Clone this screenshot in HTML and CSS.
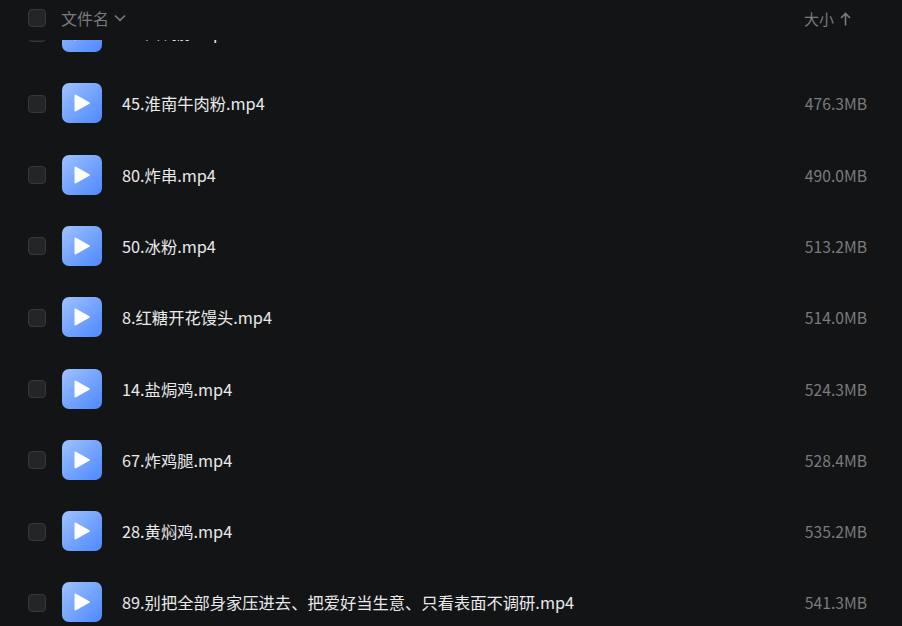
FILE: index.html
```html
<!DOCTYPE html>
<html lang="zh-CN">
<head>
  <meta charset="UTF-8">
  <meta name="viewport" content="width=device-width, initial-scale=1.0">
  <title>文件列表</title>
  <link rel="stylesheet" href="styles.css">
</head>
<body>
  <!-- Table header -->
  <div class="list-head">
    <span class="check"></span>
    <span class="head-name">文件名
      <svg class="chevron" width="12" height="8" viewBox="0 0 12 8"><path d="M1 1.500 6 6.300l5-4.800" fill="none" stroke="currentColor" stroke-width="1.600"/></svg>
    </span>
    <span class="head-size">大小
      <svg class="arrow" width="11" height="14" viewBox="0 0 11 14"><path d="M5.500 13.500V1.500M1 6l4.500-4.500L10 6" fill="none" stroke="currentColor" stroke-width="1.600"/></svg>
    </span>
  </div>

  <!-- File rows -->
  <div class="list-body">
    <div class="list-scroll">
      <div class="row">
        <span class="check"></span>
        <span class="thumb"><svg width="16" height="18" viewBox="0 0 16 18"><path d="M1.500 1.500v15L14.800 9z" fill="#fff" stroke="#fff" stroke-width="2" stroke-linejoin="round"/></svg></span>
        <span class="name">34.卤鸭脖.mp4</span>
      </div>
      <div class="row">
        <span class="check"></span>
        <span class="thumb"><svg width="16" height="18" viewBox="0 0 16 18"><path d="M1.500 1.500v15L14.800 9z" fill="#fff" stroke="#fff" stroke-width="2" stroke-linejoin="round"/></svg></span>
        <span class="name">45.淮南牛肉粉.mp4</span>
        <span class="size">476.3MB</span>
      </div>
      <div class="row">
        <span class="check"></span>
        <span class="thumb"><svg width="16" height="18" viewBox="0 0 16 18"><path d="M1.500 1.500v15L14.800 9z" fill="#fff" stroke="#fff" stroke-width="2" stroke-linejoin="round"/></svg></span>
        <span class="name">80.炸串.mp4</span>
        <span class="size">490.0MB</span>
      </div>
      <div class="row">
        <span class="check"></span>
        <span class="thumb"><svg width="16" height="18" viewBox="0 0 16 18"><path d="M1.500 1.500v15L14.800 9z" fill="#fff" stroke="#fff" stroke-width="2" stroke-linejoin="round"/></svg></span>
        <span class="name">50.冰粉.mp4</span>
        <span class="size">513.2MB</span>
      </div>
      <div class="row">
        <span class="check"></span>
        <span class="thumb"><svg width="16" height="18" viewBox="0 0 16 18"><path d="M1.500 1.500v15L14.800 9z" fill="#fff" stroke="#fff" stroke-width="2" stroke-linejoin="round"/></svg></span>
        <span class="name">8.红糖开花馒头.mp4</span>
        <span class="size">514.0MB</span>
      </div>
      <div class="row">
        <span class="check"></span>
        <span class="thumb"><svg width="16" height="18" viewBox="0 0 16 18"><path d="M1.500 1.500v15L14.800 9z" fill="#fff" stroke="#fff" stroke-width="2" stroke-linejoin="round"/></svg></span>
        <span class="name">14.盐焗鸡.mp4</span>
        <span class="size">524.3MB</span>
      </div>
      <div class="row">
        <span class="check"></span>
        <span class="thumb"><svg width="16" height="18" viewBox="0 0 16 18"><path d="M1.500 1.500v15L14.800 9z" fill="#fff" stroke="#fff" stroke-width="2" stroke-linejoin="round"/></svg></span>
        <span class="name">67.炸鸡腿.mp4</span>
        <span class="size">528.4MB</span>
      </div>
      <div class="row">
        <span class="check"></span>
        <span class="thumb"><svg width="16" height="18" viewBox="0 0 16 18"><path d="M1.500 1.500v15L14.800 9z" fill="#fff" stroke="#fff" stroke-width="2" stroke-linejoin="round"/></svg></span>
        <span class="name">28.黄焖鸡.mp4</span>
        <span class="size">535.2MB</span>
      </div>
      <div class="row">
        <span class="check"></span>
        <span class="thumb"><svg width="16" height="18" viewBox="0 0 16 18"><path d="M1.500 1.500v15L14.800 9z" fill="#fff" stroke="#fff" stroke-width="2" stroke-linejoin="round"/></svg></span>
        <span class="name">89.别把全部身家压进去、把爱好当生意、只看表面不调研.mp4</span>
        <span class="size">541.3MB</span>
      </div>
    </div>
  </div>
</body>
</html>
```

FILE: styles.css
```css
html, body {
  height: 100%;
}

body {
  margin: 0;
  background: #131416;
  font-family: "Noto Sans CJK SC", "Liberation Sans", sans-serif;
  font-size: 16.3px;
  overflow: hidden;
  display: flex;
  flex-direction: column;
}

.list-head {
  flex: none;
  height: 40px;
  padding: 0 34px 4px 28px;
  box-sizing: border-box;
  display: flex;
  align-items: center;
  color: #7a7b7e;
  font-size: 16px;
}

.head-name {
  margin-left: 15px;
  display: flex;
  align-items: center;
  gap: 5px;
}

.head-size {
  margin-left: auto;
  width: 64px;
  font-size: 15px;
  display: flex;
  align-items: center;
  gap: 6px;
}

.arrow {
  margin-top: 1px;
}

.check {
  flex: none;
  width: 18px;
  height: 18px;
  box-sizing: border-box;
  background: #242528;
  border: 1px solid #37383b;
  border-radius: 4px;
}

.row .check {
  margin-top: 1px;
}

.list-body {
  flex: 1;
  overflow: hidden;
}

.list-scroll {
  margin-top: -43.600px;
}

.row {
  height: 71.300px;
  padding: 0 35px 0 28px;
  box-sizing: border-box;
  display: flex;
  align-items: center;
}

.thumb {
  flex: none;
  width: 40px;
  height: 40px;
  margin-left: 16px;
  border-radius: 7px;
  background: linear-gradient(135deg, #9fc2ff, #4d88ff);
  display: flex;
  align-items: center;
  justify-content: center;
}

.name {
  margin-left: 20px;
  color: #e8e9ea;
}

.size {
  margin-left: auto;
  padding-top: 1px;
  color: #7a7b7e;
  font-size: 15.7px;
}
```
